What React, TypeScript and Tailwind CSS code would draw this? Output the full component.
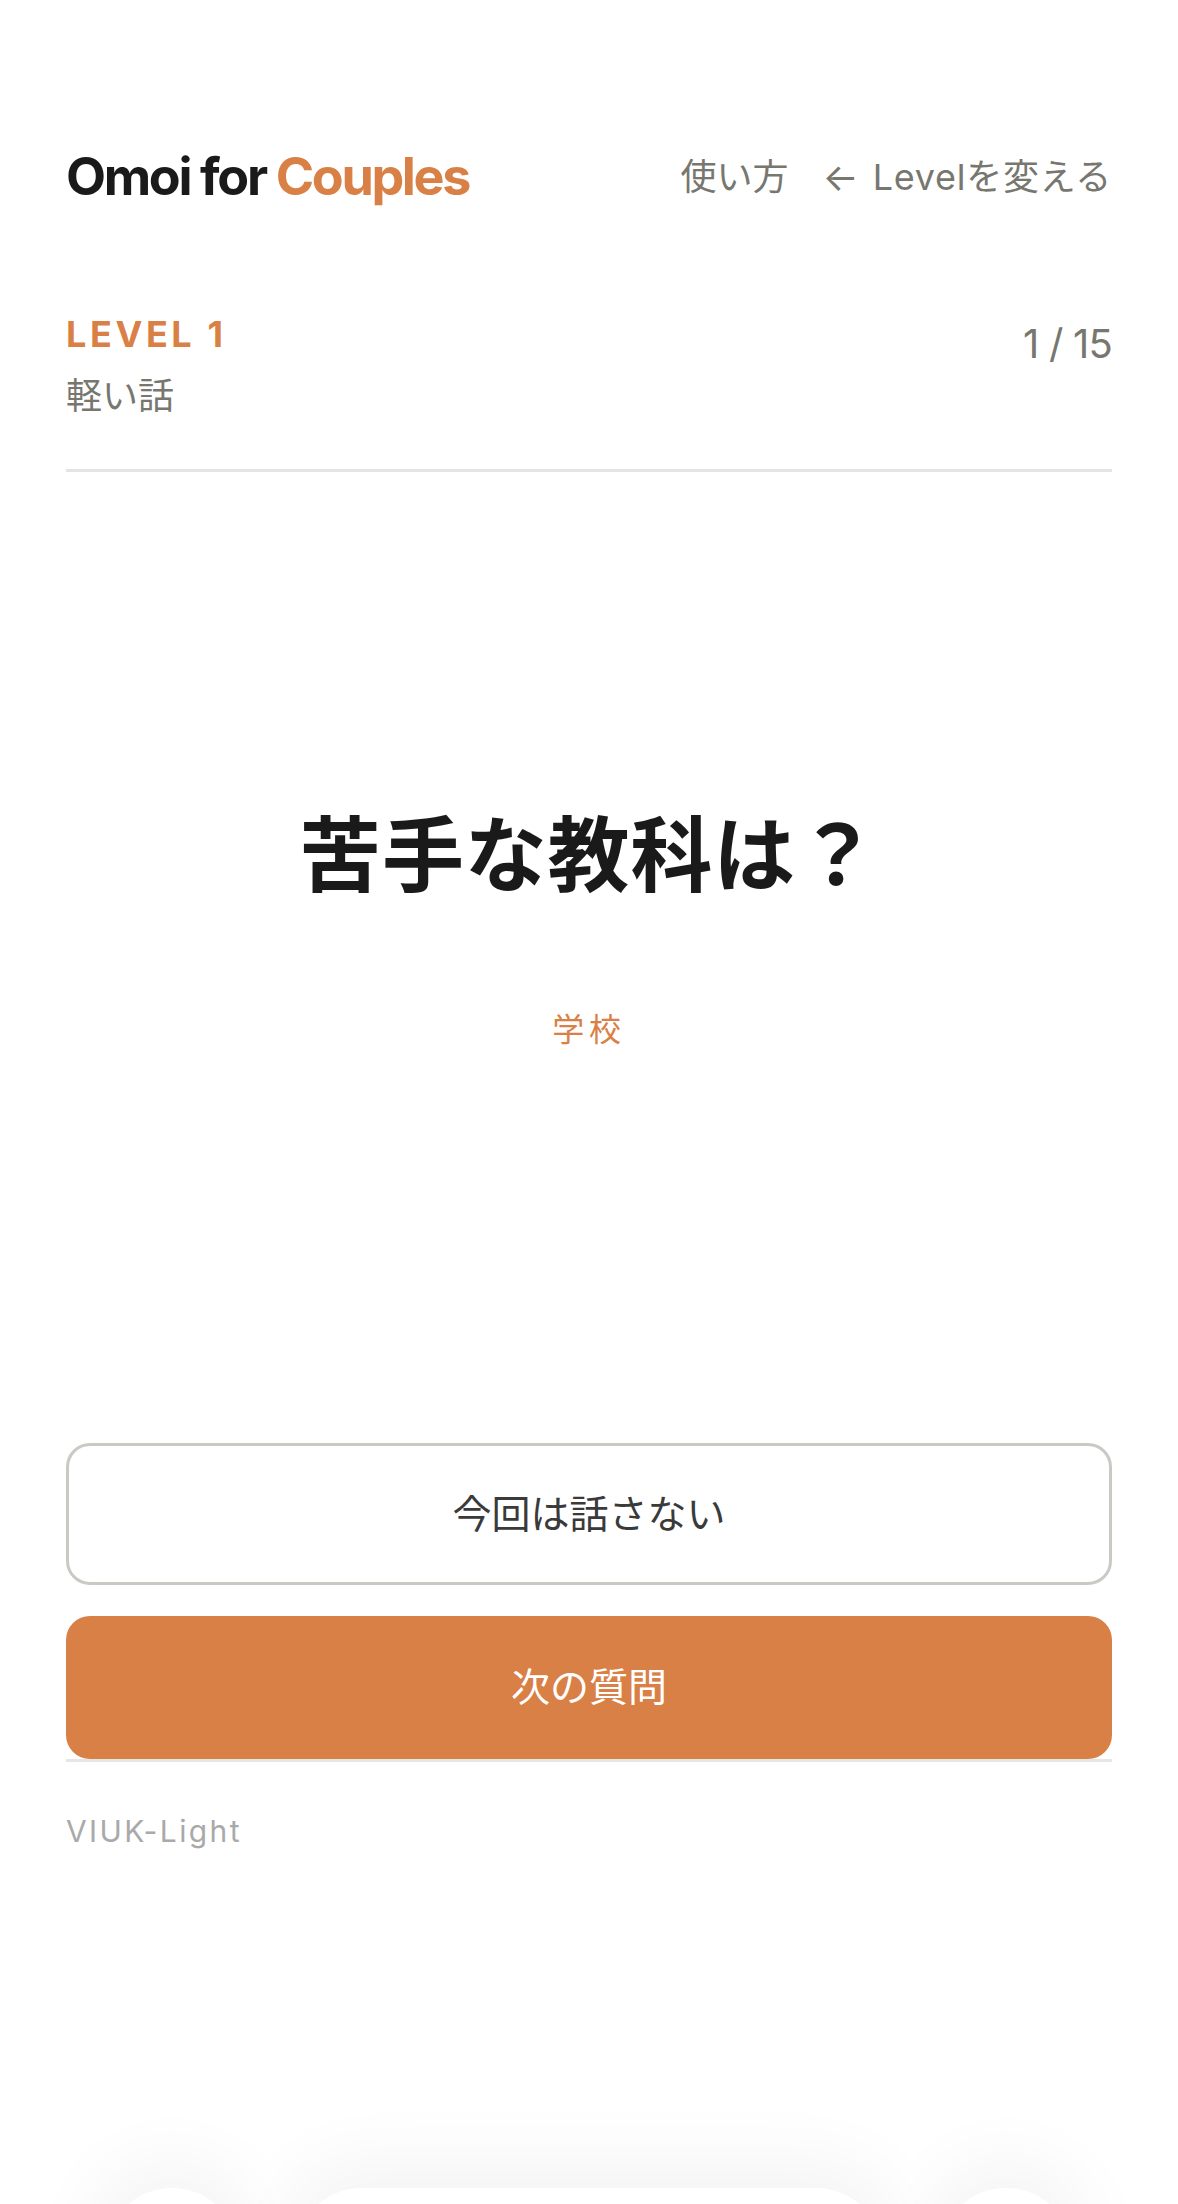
import React from 'react';

const FONT = { fontFamily: 'Inter, "Noto Sans CJK JP", sans-serif' };

// Ghost of the browser toolbar peeking in at the very bottom
function BottomBar() {
  return (
    <div className="fixed inset-x-0 bottom-[-116px] h-[132px] pointer-events-none">
      <div className="relative h-full">
        <div className="absolute left-[106px] top-0 h-[132px] w-[132px] rounded-full bg-white shadow-[0_-10px_70px_20px_rgba(0,0,0,0.045)]" />
        <div className="absolute left-[296px] top-0 h-[132px] w-[586px] rounded-full bg-white shadow-[0_-10px_70px_20px_rgba(0,0,0,0.045)]" />
        <div className="absolute right-[106px] top-0 h-[132px] w-[132px] rounded-full bg-white shadow-[0_-10px_70px_20px_rgba(0,0,0,0.045)]" />
      </div>
    </div>
  );
}

export default function App() {
  return (
    <div className="min-h-[2204px] bg-white text-[#1a1a1a]" style={FONT}>
      <div className="px-[66px]">
        {/* Header */}
        <header className="flex items-center justify-between pt-[151px]">
          <h1 className="text-[52px] leading-none font-bold tracking-[-0.045em]">
            Omoi for <span className="text-[#d98046]">Couples</span>
          </h1>
          <nav className="flex items-center gap-[34px] text-[36px] leading-none text-[#77776f]">
            <span>使い方</span>
            <span className="flex items-center gap-[14px]">
              <span className="text-[38px]">←</span>
              <span className="tracking-[0.02em]">Levelを変える</span>
            </span>
          </nav>
        </header>

        {/* Level */}
        <div className="mt-[113px] flex justify-between border-b-[3px] border-[#e4e4e4] pb-[55px]">
          <div>
            <p className="text-[36px] leading-none font-bold tracking-[0.1em] text-[#d98046]">LEVEL 1</p>
            <p className="mt-[26px] text-[36px] leading-none text-[#77776f]">軽い話</p>
          </div>
          <p className="mt-[8px] text-[40px] leading-none tracking-[-0.02em] text-[#77776f]">1 / 15</p>
        </div>

        {/* Question */}
        <div className="flex flex-col items-center">
          <h2 className="mt-[343px] text-[82px] leading-none font-bold tracking-[0.01em]">苦手な教科は？</h2>
          <p className="mt-[117px] text-[32px] leading-none tracking-[0.15em] text-[#d98046]">学校</p>
        </div>

        {/* Actions */}
        <div className="mt-[397px] flex flex-col">
          <button className="h-[142px] rounded-[24px] border-[3px] border-[#cacac4] bg-white text-[39px] text-[#3a3a3a]">
            今回は話さない
          </button>
          <button className="mt-[31px] h-[143px] rounded-[24px] bg-[#d98046] text-[39px] text-white">
            次の質問
          </button>
          <div className="h-[3px] bg-[#e6e6e6]" />
        </div>

        <p className="mt-[54px] text-[30px] leading-none tracking-[0.08em] text-[#a9a9a9]">VIUK-Light</p>
      </div>
      <BottomBar />
    </div>
  );
}
